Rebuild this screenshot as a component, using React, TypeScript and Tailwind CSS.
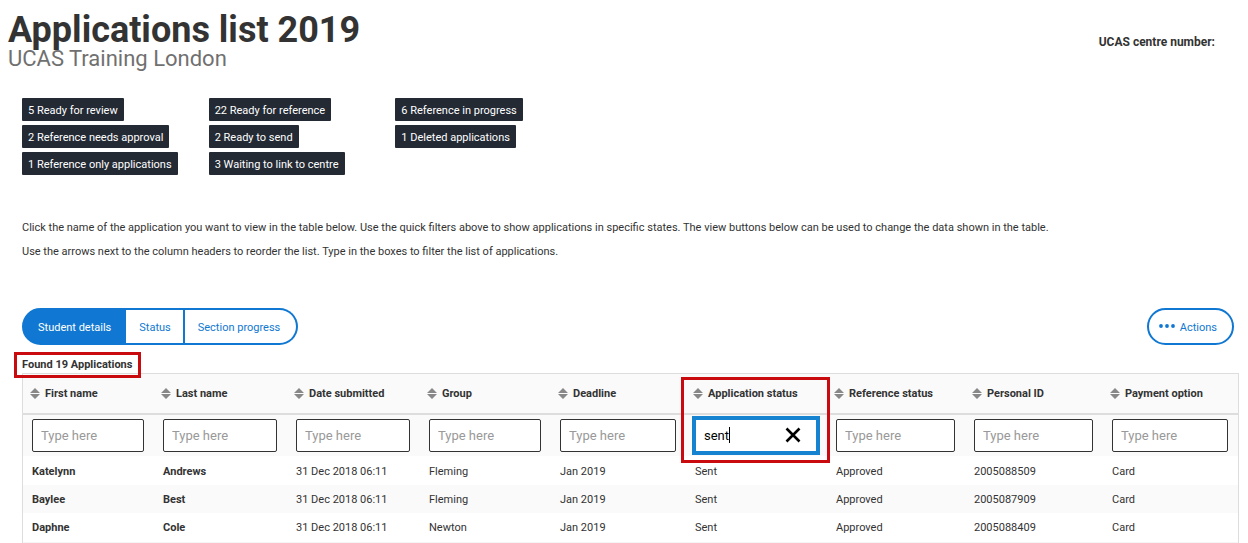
import { useState } from 'react'
import clsx from 'clsx'

const quickFilters = [
  '5 Ready for review',
  '2 Reference needs approval',
  '1 Reference only applications',
  '22 Ready for reference',
  '2 Ready to send',
  '3 Waiting to link to centre',
  '6 Reference in progress',
  '1 Deleted applications'
]

const columns = [
  { name: 'First name', width: 'w-[131px]' },
  { name: 'Last name', width: 'w-[133px]' },
  { name: 'Date submitted', width: 'w-[133px]' },
  { name: 'Group', width: 'w-[131px]' },
  { name: 'Deadline', width: 'w-[135px]' },
  { name: 'Application status', width: 'w-[141px]' },
  { name: 'Reference status', width: 'w-[138px]' },
  { name: 'Personal ID', width: 'w-[138px]' },
  { name: 'Payment option', width: 'w-[135px]' }
]

const rows = [
  ['Katelynn', 'Andrews', '31 Dec 2018 06:11', 'Fleming', 'Jan 2019', 'Sent', 'Approved', '2005088509', 'Card'],
  ['Baylee', 'Best', '31 Dec 2018 06:11', 'Fleming', 'Jan 2019', 'Sent', 'Approved', '2005087909', 'Card'],
  ['Daphne', 'Cole', '31 Dec 2018 06:11', 'Newton', 'Jan 2019', 'Sent', 'Approved', '2005088409', 'Card']
]

const views = ['Student details', 'Status', 'Section progress']

export default function App() {
  const [view, setView] = useState(views[0])

  return (
    <main className="font-['Roboto',sans-serif] text-[11px] leading-4 text-[#333]">
      <header className="flex items-start justify-between pl-2 pr-[33px] pt-[11px]">
        <div>
          <h1 className="text-[36px] font-bold leading-[38px]">Applications list 2019</h1>
          <p className="text-[22px] leading-5 text-[#707070]">UCAS Training London</p>
        </div>
        <p className="pt-[23px] text-xs font-bold">UCAS centre number:</p>
      </header>

      <div className="pl-[22px] pr-[9px] pt-[29px]">
        <ul className="grid w-[560px] grid-flow-col grid-cols-3 grid-rows-3 gap-y-1">
          {quickFilters.map((label) => (
            <li key={label} className="flex">
              <button className="h-[23px] rounded-[1px] bg-[#232a34] px-[6px] pt-[2px] text-white">{label}</button>
            </li>
          ))}
        </ul>

        <div className="mt-[45px] space-y-2">
          <p>
            Click the name of the application you want to view in the table below. Use the quick filters above to show
            applications in specific states. The view buttons below can be used to change the data shown in the table.
          </p>
          <p>
            Use the arrows next to the column headers to reorder the list. Type in the boxes to filter the list of
            applications.
          </p>
        </div>

        <div className="mt-12 flex items-center justify-between pr-[5px]">
          <div className="flex">
            {views.map((name) => (
              <button
                key={name}
                onClick={() => setView(name)}
                className={clsx(
                  'h-[37px] border-y-2 border-r-2 border-[#1078d2] pl-[13px] pr-3 pt-[2px]',
                  'first:rounded-l-full first:border-l-2 first:pl-[14px] first:pr-[13px] last:rounded-r-full last:pr-4',
                  view === name ? 'bg-[#1078d2] text-white' : 'text-[#1078d2]'
                )}
              >
                {name}
              </button>
            ))}
          </div>
          <button className="flex h-[37px] items-center gap-[5px] rounded-full border-2 border-[#1078d2] pl-[10px] pr-[15px] pt-[2px] text-[#1078d2]">
            <svg viewBox="0 0 16 4" className="mb-[3px] h-1 w-4 fill-current">
              <circle cx="2" cy="2" r="1.9" />
              <circle cx="8" cy="2" r="1.9" />
              <circle cx="14" cy="2" r="1.9" />
            </svg>
            Actions
          </button>
        </div>

        <p className="relative mt-3 w-fit font-bold">
          Found 19 Applications
          <Highlight className="-left-2 -right-[9px] -top-[5px] -bottom-[5px]" />
        </p>

        <ApplicationsTable />
      </div>
    </main>
  )
}

function ApplicationsTable() {
  const [filters, setFilters] = useState<Record<string, string>>({ 'Application status': 'sent' })

  return (
    <div className="border border-[#ddd]">
      <table className="w-full table-fixed border-collapse text-left">
        <colgroup>
          {columns.map(({ name, width }) => (
            <col key={name} className={width} />
          ))}
        </colgroup>
        <thead className="bg-[#fafafa]">
          <tr className="h-10 border-b-2 border-[#ddd]">
            {columns.map(({ name }) => (
              <th key={name} className="relative p-0 pl-[7px] font-bold">
                <button className="flex items-center gap-[5px]">
                  <SortIcon />
                  {name}
                </button>
                {filters[name] && <Highlight className="-left-[5px] -right-[3px] top-[3px] h-[86px]" />}
              </th>
            ))}
          </tr>
          <tr className="h-[42px]">
            {columns.map(({ name }) => (
              <td key={name} className="p-0 pl-[9px] pr-[10px]">
                <FilterInput
                  label={name}
                  value={filters[name] ?? ''}
                  onChange={(value) => setFilters({ ...filters, [name]: value })}
                />
              </td>
            ))}
          </tr>
        </thead>
        <tbody>
          {rows.map((row) => (
            <tr key={row[7]} className="h-[29px] last:border-b last:border-[#f5f5f5] even:h-7 even:bg-[#fafafa]">
              {row.map((cell, i) => (
                <td key={i} className={clsx('p-0 pl-[9px] pt-[2px]', i < 2 && 'font-bold')}>
                  {cell}
                </td>
              ))}
            </tr>
          ))}
        </tbody>
      </table>
    </div>
  )
}

type FilterInputProps = {
  label: string
  value: string
  onChange: (value: string) => void
}

function FilterInput({ label, value, onChange }: FilterInputProps) {
  return (
    <div className="relative">
      <input
        aria-label={label}
        placeholder="Type here"
        value={value}
        onChange={(e) => onChange(e.target.value)}
        className={clsx(
          'block h-[33px] w-full border bg-white px-2 text-[13px] text-black placeholder:text-[#999]',
          value ? 'border-[#1583d0] ring-3 ring-[#1583d0]' : 'rounded-[2px] border-[#333]'
        )}
      />
      {value && (
        <>
          <span className="absolute left-[34px] top-2 h-4 w-px bg-black" />
          <button aria-label="Clear" onClick={() => onChange('')} className="absolute right-4 top-2">
            <svg viewBox="0 0 16 16" className="size-4 stroke-black" strokeWidth="2.6">
              <path d="M1.5 1.5l13 13M14.5 1.5l-13 13" />
            </svg>
          </button>
        </>
      )}
    </div>
  )
}

function SortIcon() {
  return (
    <svg viewBox="0 0 10 11" className="h-[11px] w-[10px] fill-[#888]">
      <path d="M5 0l5 5H0zM0 6h10l-5 5z" />
    </svg>
  )
}

function Highlight({ className }: { className: string }) {
  return <span className={clsx('pointer-events-none absolute z-10 border-3 border-[#c90b0f]', className)} />
}
